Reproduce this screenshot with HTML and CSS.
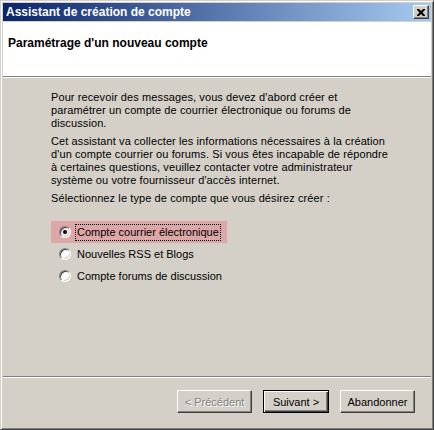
FILE: index.html
```html
<!DOCTYPE html>
<html lang="fr">
<head>
<meta charset="utf-8">
<title>Assistant de création de compte</title>
<link rel="stylesheet" href="styles.css">
</head>
<body>
<div class="window">
  <div class="titlebar">
    <span class="title">Assistant de création de compte</span>
    <span class="close"><svg width="8" height="7" viewBox="0 0 8 7"><path d="M0 0h2l2 2 2-2h2v1L5.5 3.5 8 6v1H6L4 5 2 7H0V6l2.5-2.5L0 1z" fill="#000"/></svg></span>
  </div>
  <div class="header">
    <h1 class="heading">Paramétrage d'un nouveau compte</h1>
  </div>
  <div class="content">
    <p class="para">Pour recevoir des messages, vous devez d'abord créer et<br>paramétrer un compte de courrier électronique ou forums de<br>discussion.</p>
    <p class="para">Cet assistant va collecter les informations nécessaires à la création<br>d'un compte courrier ou forums. Si vous êtes incapable de répondre<br>à certaines questions, veuillez contacter votre administrateur<br>système ou votre fournisseur d'accès internet.</p>
    <p class="para">Sélectionnez le type de compte que vous désirez créer :</p>
    <div class="options">
      <div class="option option-hover"><span class="radio radio-checked"></span><span class="label label-focus">Compte courrier électronique</span></div>
      <div class="option"><span class="radio"></span><span class="label">Nouvelles RSS et Blogs</span></div>
      <div class="option"><span class="radio"></span><span class="label">Compte forums de discussion</span></div>
    </div>
  </div>
  <div class="footer">
    <span class="btn btn-disabled">&lt; Précédent</span>
    <span class="btn btn-default">Suivant &gt;</span>
    <span class="btn">Abandonner</span>
  </div>
</div>
</body>
</html>
```

FILE: styles.css
```css
* { box-sizing: border-box; }
html, body { margin: 0; padding: 0; background: #d4d0c8; }
body { font-family: "Liberation Sans", Arial, sans-serif; font-size: 11px; color: #000; }

.window {
  width: 434px;
  height: 430px;
  background: #d4d0c8;
  border: 1px solid;
  border-color: #d4d0c8 #404040 #404040 #d4d0c8;
  box-shadow: inset 1px 1px 0 #fff, inset -1px -1px 0 #808080;
  padding: 2px 2px 2px 2px;
  display: flex;
  flex-direction: column;
}

.titlebar {
  height: 18px;
  background: linear-gradient(to right, #0a246a, #a6caf0);
  display: flex;
  align-items: center;
  justify-content: space-between;
  padding: 0 2px 0 3px;
  flex: none;
}
.title { color: #fff; font-weight: bold; font-size: 12px; }
.close {
  width: 16px;
  height: 14px;
  background: #d4d0c8;
  border: 1px solid;
  border-color: #fff #404040 #404040 #fff;
  box-shadow: inset -1px -1px 0 #808080;
  display: flex;
  align-items: center;
  justify-content: center;
}

.header {
  height: 55px;
  background: #fff;
  margin-top: 1px;
  border-bottom: 1px solid #808080;
  box-shadow: 0 1px 0 #fff;
  flex: none;
  padding: 15px 0 0 5px;
}
.heading { margin: 0; font-size: 12px; font-weight: bold; line-height: 13px; }

.content {
  flex: 1;
  margin-top: 1px;
  padding: 13px 0 0 48px;
  border-bottom: 1px solid #808080;
  box-shadow: 0 1px 0 #fff;
}
.para { margin: 0 0 5px; line-height: 13px; letter-spacing: 0.1px; }

.options { margin-top: 16px; display: flex; flex-direction: column; }
.option {
  height: 22px;
  display: flex;
  align-items: center;
  padding-left: 8px;
  width: 176px;
}
.option-hover { background: #dda7a7; }
.radio {
  width: 12px;
  height: 12px;
  border-radius: 50%;
  background: #fff;
  border: 1px solid;
  border-color: #808080 #fff #fff #808080;
  box-shadow: inset 1px 1px 0 #404040, inset -1px -1px 0 #d4d0c8;
  display: flex;
  align-items: center;
  justify-content: center;
  flex: none;
}
.radio-checked { background: #f3e6e6; }
.radio-checked::after {
  content: "";
  width: 4px;
  height: 4px;
  border-radius: 50%;
  background: #000;
}
.label { margin-left: 5px; padding: 1px 1px; line-height: 13px; }
.label-focus { outline: 1px dotted #000; }

.footer {
  height: 48px;
  flex: none;
  margin-top: 2px;
  display: flex;
  justify-content: flex-end;
  align-items: flex-start;
  gap: 11px;
  padding: 11px 16px 0 0;
}
.btn {
  width: 75px;
  height: 23px;
  display: flex;
  align-items: center;
  justify-content: center;
  background: #d4d0c8;
  border: 1px solid;
  border-color: #fff #404040 #404040 #fff;
  box-shadow: inset -1px -1px 0 #808080;
}
.btn-disabled { color: #808080; text-shadow: 1px 1px 0 #fff; }
.btn-default {
  width: 66px;
  border: 1px solid #000;
  box-shadow: inset 1px 1px 0 #fff, inset -1px -1px 0 #404040, inset -2px -2px 0 #808080;
}
```
